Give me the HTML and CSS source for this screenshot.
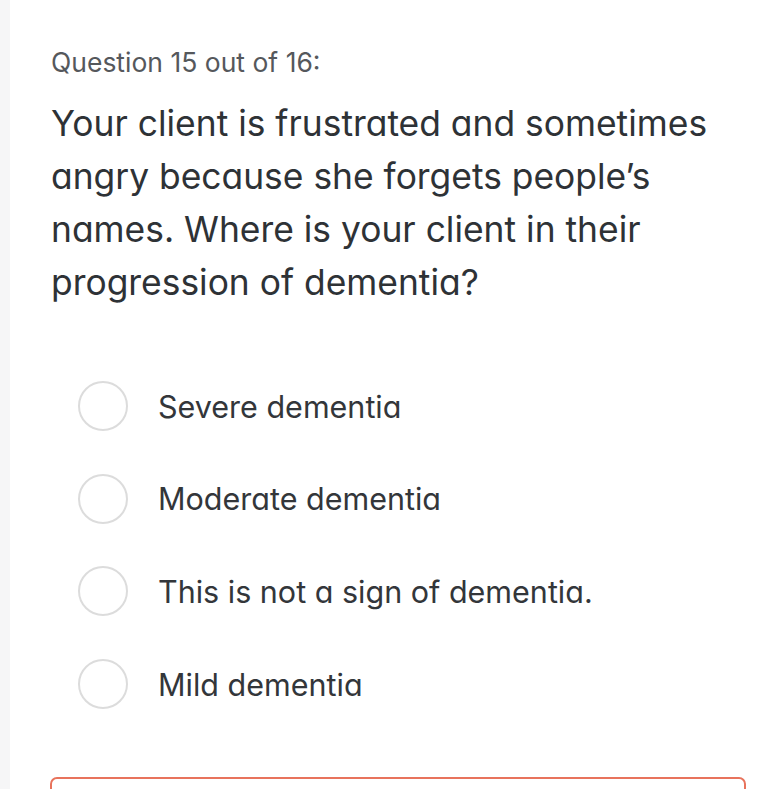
FILE: index.html
```html
<!DOCTYPE html>
<html>
<head>
<meta charset="utf-8">
<link rel="stylesheet" href="styles.css">
</head>
<body>
<div class="page">
  <div class="strip"></div>
  <main class="content">
    <div class="counter">Question 15 out of 16:</div>
    <div class="question">Your client is frustrated and sometimes angry because she forgets people’s names. Where is your client in their progression of dementia?</div>
    <ul class="options">
      <li class="option"><span class="radio"></span><span class="label">Severe dementia</span></li>
      <li class="option"><span class="radio"></span><span class="label">Moderate dementia</span></li>
      <li class="option"><span class="radio"></span><span class="label">This is not a sign of dementia.</span></li>
      <li class="option"><span class="radio"></span><span class="label">Mild dementia</span></li>
    </ul>
    <div class="submit"></div>
  </main>
</div>
</body>
</html>
```
FILE: styles.css
```css
html, body {
  margin: 0;
  padding: 0;
  background: #ffffff;
  height: 100%;
  overflow: hidden;
}
.page {
  display: flex;
  min-height: 789px;
  font-family: Inter, "Noto Sans", sans-serif;
  font-feature-settings: "cv11" 1;
}
.strip {
  width: 10px;
  flex: 0 0 10px;
  background: #f6f6f7;
}
.content {
  flex: 1;
  padding: 47px 0 0 41px;
  box-sizing: border-box;
}
.counter {
  font-size: 26.5px;
  line-height: 30px;
  color: #55585c;
}
.question {
  margin-top: 20px;
  font-size: 35.4px;
  line-height: 53px;
  color: #2e3236;
  width: 680px;
}
.options {
  list-style: none;
  margin: 71px 0 0 0;
  padding: 0 0 0 27px;
  display: flex;
  flex-direction: column;
  gap: 40.7px;
}
.option {
  display: flex;
  align-items: center;
  height: 52px;
}
.radio {
  width: 46px;
  height: 46px;
  border: 2px solid #dcdcdc;
  border-radius: 50%;
  flex: 0 0 auto;
}
.label {
  margin-left: 30px;
  font-size: 30.5px;
  color: #33363a;
}
.submit {
  margin-top: 67px;
  margin-left: -1px;
  width: 696px;
  height: 60px;
  border: 2px solid #e8735c;
  border-radius: 7px;
  box-sizing: border-box;
}
```
